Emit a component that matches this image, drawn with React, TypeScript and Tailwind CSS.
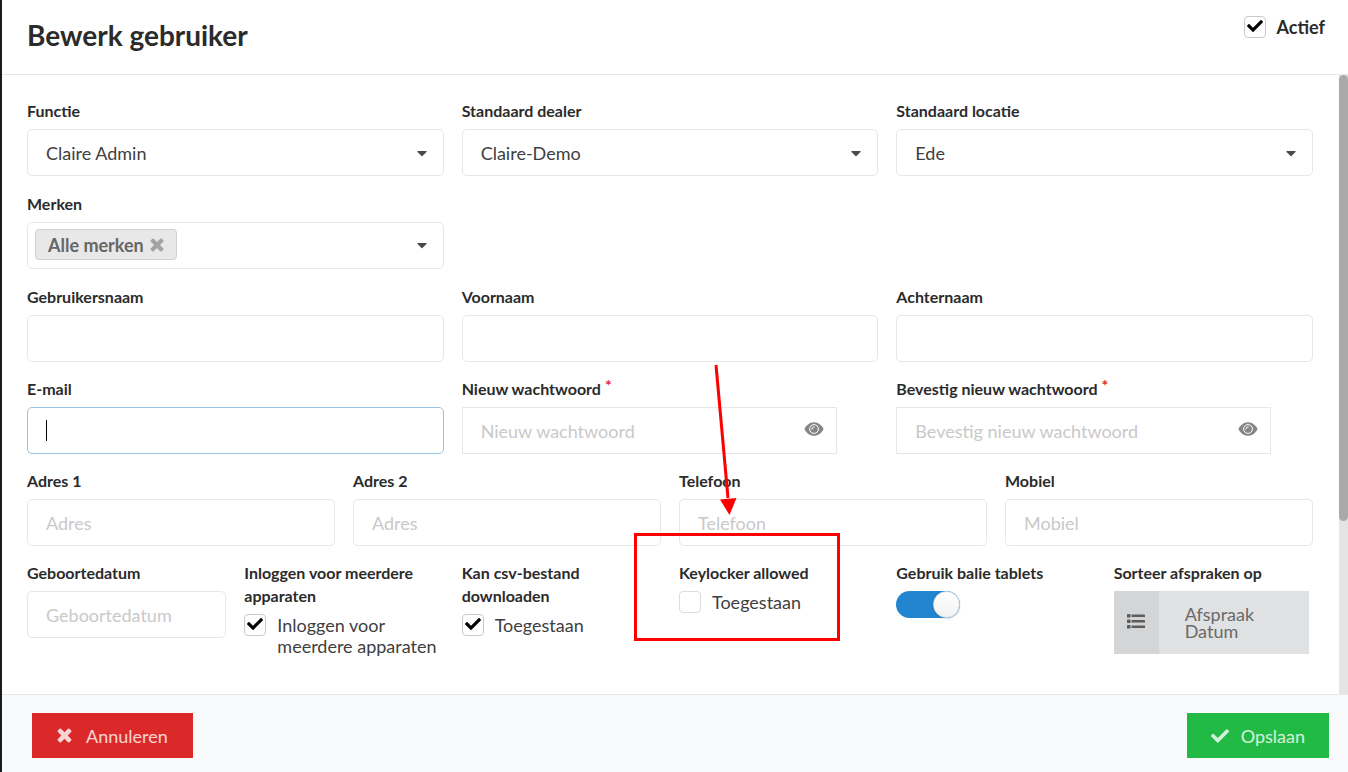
import { useState, type ReactNode } from "react";
import { FaCaretDown, FaCheck } from "react-icons/fa";
import clsx from "clsx";

const control =
  "h-[47px] w-full border bg-white px-[18px] text-lg text-[#404040] outline-none placeholder:text-[#c9c9c9]";

function TimesIcon({ className }: { className?: string }) {
  return (
    <svg aria-hidden viewBox="256 320 1280 1280" fill="currentColor" className={className}>
      <path d="M1490 1322q0 40-28 68l-136 136q-28 28-68 28t-68-28l-294-294-294 294q-28 28-68 28t-68-28l-136-136q-28-28-28-68t28-68l294-294-294-294q-28-28-28-68t28-68l136-136q28-28 68-28t68 28l294 294 294-294q28-28 68-28t68 28l136 136q28 28 28 68t-28 68l-294 294 294 294q28 28 28 68z" />
    </svg>
  );
}

function EyeIcon() {
  return (
    <svg aria-hidden viewBox="0 0 20 14" className="h-3.5 w-5">
      <path d="M.4 7C2.300 3 6 .2 10 .2S17.700 3 19.600 7C17.700 11 14 13.800 10 13.800S2.300 11 .4 7Z" fill="#868686" />
      <circle cx="10" cy="7" r="4.400" fill="none" stroke="#fff" strokeWidth="1" />
      <path d="M7.800 7.200A2.300 2.300 0 0 1 10.200 4.800" fill="none" stroke="#fff" strokeWidth="1" strokeLinecap="round" />
    </svg>
  );
}

function ListIcon() {
  return (
    <svg aria-hidden viewBox="0 0 18 15" fill="#5c5c5c" className="h-[15px] w-[18px]">
      {[0, 5.5, 11].map((y) => (
        <g key={y}>
          <rect x="0" y={y} width="3.500" height="3.500" rx=".6" />
          <rect x="4.500" y={y + 0.5} width="13.500" height="2.500" rx=".6" />
        </g>
      ))}
    </svg>
  );
}

type FieldProps = {
  id: string;
  label: string;
  required?: boolean;
  children: ReactNode;
};

function Field({ id, label, required, children }: FieldProps) {
  return (
    <div className="relative">
      <label htmlFor={id} className="mb-[7px] block text-base leading-[23px] font-bold text-[#2b2b2b]">
        {label}
        {required && <span className="ml-1 align-top leading-4 text-[#db2828]">*</span>}
      </label>
      {children}
    </div>
  );
}

function SelectField({ id, label, value }: { id: string; label: string; value: string }) {
  return (
    <Field id={id} label={label}>
      <div className="relative">
        <select
          id={id}
          defaultValue={value}
          className={clsx(control, "appearance-none rounded-[5px] border-[#e6e7e8]")}
        >
          <option>{value}</option>
        </select>
        <FaCaretDown className="pointer-events-none absolute top-4 right-3.5 size-4 text-[#4a4a4a]" />
      </div>
    </Field>
  );
}

function TextField({ id, label, placeholder }: { id: string; label: string; placeholder?: string }) {
  return (
    <Field id={id} label={label}>
      <input
        id={id}
        type="text"
        placeholder={placeholder}
        className={clsx(control, "rounded-[5px] border-[#e6e7e8]")}
      />
    </Field>
  );
}

function PasswordField({ id, label }: { id: string; label: string }) {
  const [visible, setVisible] = useState(false);

  return (
    <Field id={id} label={label} required>
      <div className="relative w-9/10">
        <input
          id={id}
          type={visible ? "text" : "password"}
          placeholder={label}
          className={clsx(control, "border-[#e6e7e8]")}
        />
        <button
          type="button"
          aria-label="Toon wachtwoord"
          onClick={() => setVisible(!visible)}
          className="absolute top-[15px] right-[13px]"
        >
          <EyeIcon />
        </button>
      </div>
    </Field>
  );
}

type CheckboxProps = {
  id: string;
  label: string;
  checked?: boolean;
  bold?: boolean;
};

function Checkbox({ id, label, checked, bold }: CheckboxProps) {
  return (
    <div className="flex items-start gap-[11px]">
      <span className="relative block size-[22px] shrink-0">
        <input
          id={id}
          type="checkbox"
          defaultChecked={checked}
          className="peer block size-[22px] appearance-none rounded-[4px] border border-[#dcdcdd] bg-white checked:border-[#c9c9ca]"
        />
        <FaCheck className="pointer-events-none absolute top-0.5 left-[3px] hidden size-4 text-black peer-checked:block" />
      </span>
      <label
        htmlFor={id}
        className={clsx("pt-px text-lg leading-[21px]", bold ? "font-bold text-[#2b2b2b]" : "text-[#404040]")}
      >
        {label}
      </label>
    </div>
  );
}

// Red frame and arrow that point at the keylocker option
function Highlight() {
  return (
    <>
      <div className="pointer-events-none absolute -top-7 -left-[45px] h-[108px] w-[206px] border-3 border-[#fe0000]" />
      <svg
        aria-hidden
        viewBox="0 0 40 152"
        className="pointer-events-none absolute -top-[197px] left-[26px] h-[152px] w-10"
      >
        <path d="M11 1 L23 134" stroke="#fe0000" strokeWidth="3" />
        <path d="M15 135.500 L31.500 134 L24.500 151 Z" fill="#fe0000" />
      </svg>
    </>
  );
}

export default function App() {
  return (
    <form className="flex min-h-screen flex-col border-l-2 border-[#1b1b1b] bg-white font-['Lato',sans-serif]">
      <header className="flex h-[75px] items-start justify-between border-b border-[#e6e7e8] pt-4 pr-[23px] pl-[25px]">
        <h1 className="text-[28px] leading-[38px] font-bold text-[#2b2b2b]">Bewerk gebruiker</h1>
        <Checkbox id="actief" label="Actief" checked bold />
      </header>

      <div className="flex flex-1">
        <main className="flex flex-1 flex-col gap-[15px] pt-6 pr-[26px] pb-8 pl-[25px]">
          <div className="mb-px grid grid-cols-3 gap-x-[18px] gap-y-4">
            <SelectField id="functie" label="Functie" value="Claire Admin" />
            <SelectField id="dealer" label="Standaard dealer" value="Claire-Demo" />
            <SelectField id="locatie" label="Standaard locatie" value="Ede" />
            <Field id="merken" label="Merken">
              <div className="relative flex h-[47px] items-center rounded-[5px] border border-[#e6e7e8] px-[7px] pb-0.5">
                <span className="flex h-[31px] items-center gap-1.5 rounded-[4px] border border-[#d0d0d0] bg-[#e8e8e8] px-3 text-lg leading-7 font-bold text-[#666]">
                  Alle merken
                  <button type="button" aria-label="Verwijder Alle merken" className="text-[#a3a3a3]">
                    <TimesIcon className="size-3.5" />
                  </button>
                </span>
                <select id="merken" className="h-full flex-1 appearance-none outline-none">
                  <option value="" />
                </select>
                <FaCaretDown className="pointer-events-none absolute top-3.5 right-[13px] size-4 text-[#4a4a4a]" />
              </div>
            </Field>
          </div>

          <div className="grid grid-cols-3 gap-x-[18px] gap-y-[15px]">
            <TextField id="gebruikersnaam" label="Gebruikersnaam" />
            <TextField id="voornaam" label="Voornaam" />
            <TextField id="achternaam" label="Achternaam" />
            <Field id="email" label="E-mail">
              <div className="relative">
                <input id="email" type="email" className={clsx(control, "rounded-[5px] border-[#96c3e0]")} />
                <span className="pointer-events-none absolute top-[13px] left-[19px] h-[21px] w-px bg-black" />
              </div>
            </Field>
            <PasswordField id="wachtwoord" label="Nieuw wachtwoord" />
            <PasswordField id="bevestig" label="Bevestig nieuw wachtwoord" />
          </div>

          <div className="grid grid-cols-4 gap-[18px]">
            <TextField id="adres1" label="Adres 1" placeholder="Adres" />
            <TextField id="adres2" label="Adres 2" placeholder="Adres" />
            <TextField id="telefoon" label="Telefoon" placeholder="Telefoon" />
            <TextField id="mobiel" label="Mobiel" placeholder="Mobiel" />
          </div>

          <div className="grid grid-cols-6 gap-[18px]">
            <TextField id="geboortedatum" label="Geboortedatum" placeholder="Geboortedatum" />
            <Field id="inloggen" label="Inloggen voor meerdere apparaten">
              <Checkbox id="inloggen" label="Inloggen voor meerdere apparaten" checked />
            </Field>
            <Field id="csv" label="Kan csv-bestand downloaden">
              <Checkbox id="csv" label="Toegestaan" checked />
            </Field>
            <Field id="keylocker" label="Keylocker allowed">
              <Checkbox id="keylocker" label="Toegestaan" />
              <Highlight />
            </Field>
            <Field id="tablets" label="Gebruik balie tablets">
              <span className="relative block h-[27px] w-16">
                <input
                  id="tablets"
                  type="checkbox"
                  defaultChecked
                  className="peer block h-full w-full appearance-none rounded-full bg-gray-200 checked:bg-[#2185d0]"
                />
                <span className="pointer-events-none absolute top-0 left-0 size-[27px] rounded-full border border-[#dededf] bg-linear-to-b from-white to-[#f2f2f2] shadow-sm peer-checked:right-0 peer-checked:left-auto" />
              </span>
            </Field>
            <Field id="sorteer" label="Sorteer afspraken op">
              <button
                id="sorteer"
                type="button"
                className="flex h-[63px] w-[195px] items-stretch bg-[#e0e1e2] text-left text-lg leading-[17px] text-[#6a6a6a]"
              >
                <span className="flex w-[45px] items-center justify-center bg-[#d4d5d7] pb-0.5">
                  <ListIcon />
                </span>
                <span className="flex flex-1 items-center pr-10 pl-[26px]">Afspraak Datum</span>
              </button>
            </Field>
          </div>
        </main>

        <div aria-hidden className="w-[9px] bg-[#e5e5e5]">
          <div className="h-[72%] rounded-full bg-[#aaa]" />
        </div>
      </div>

      <footer className="flex items-center justify-between border-t border-[#e6e7e8] bg-[#f9fafb] pt-[18px] pr-[19px] pb-3.5 pl-[30px]">
        <button type="button" className="flex h-[45px] items-center gap-3.5 bg-[#db2828] px-[25px] text-lg text-white/80">
          <TimesIcon className="size-[15px]" />
          Annuleren
        </button>
        <button type="submit" className="flex h-[45px] items-center gap-3 bg-[#21ba45] px-6 text-lg text-white/80">
          <FaCheck className="size-[18px]" />
          Opslaan
        </button>
      </footer>
    </form>
  );
}
